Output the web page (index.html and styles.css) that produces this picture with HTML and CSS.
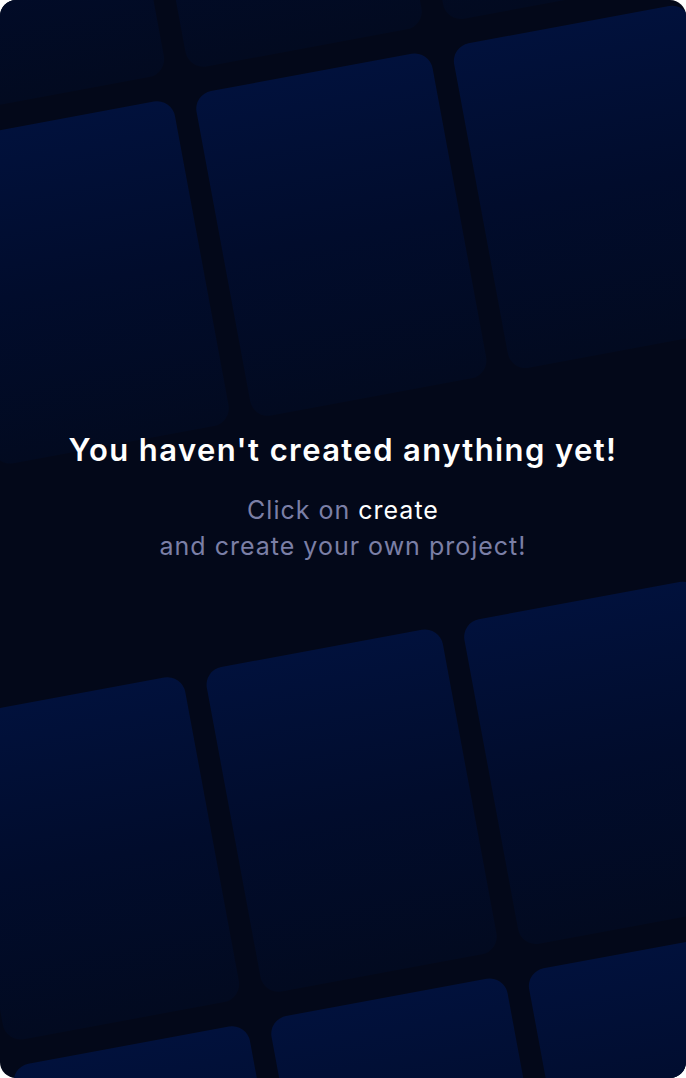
FILE: index.html
```html
<!DOCTYPE html>
<html lang="en">
<head>
<meta charset="utf-8">
<title>Empty projects</title>
<link rel="stylesheet" href="styles.css">
</head>
<body>
<main class="screen">
  <div class="deck deck-top" aria-hidden="true">
    <div class="card"></div><div class="card"></div><div class="card"></div>
    <div class="card"></div><div class="card"></div><div class="card"></div>
  </div>
  <div class="deck deck-bottom" aria-hidden="true">
    <div class="card"></div><div class="card"></div><div class="card"></div>
    <div class="card"></div><div class="card"></div><div class="card"></div>
  </div>
  <section class="empty">
    <h1 class="empty-title">You haven't created anything yet!</h1>
    <p class="empty-text">Click on <span class="accent">create</span><br>and create your own project!</p>
  </section>
</main>
</body>
</html>
```
FILE: styles.css
```css
html, body {
  margin: 0;
  padding: 0;
  background: #ffffff;
}
.screen {
  position: relative;
  width: 686px;
  height: 1078px;
  border-radius: 16px;
  overflow: hidden;
  background: #030819;
  display: flex;
  flex-direction: column;
  align-items: center;
  font-family: Inter, "Noto Sans", sans-serif;
}
.deck {
  position: absolute;
  display: grid;
  grid-template-columns: repeat(3, 240px);
  grid-auto-rows: 330px;
  gap: 25px 22px;
  transform-origin: 0 0;
  transform: rotate(-10.5deg);
}
.deck-top {
  left: -129px;
  top: -207px;
}
.deck-bottom {
  left: -54px;
  top: 718px;
}
.card {
  border-radius: 18px;
  background: linear-gradient(180deg, #01113c 0%, #010c2c 50%, #020a20 100%);
}
.empty {
  position: relative;
  padding-top: 430px;
  text-align: center;
}
.empty-title {
  margin: 0;
  font-size: 31px;
  line-height: 40px;
  font-weight: 600;
  letter-spacing: 1.4px;
  color: #ffffff;
}
.empty-text {
  margin: 22px 0 0;
  font-size: 25px;
  line-height: 36px;
  font-weight: 400;
  letter-spacing: 1px;
  color: #7b7fa6;
}
.accent {
  color: #ffffff;
}
```
